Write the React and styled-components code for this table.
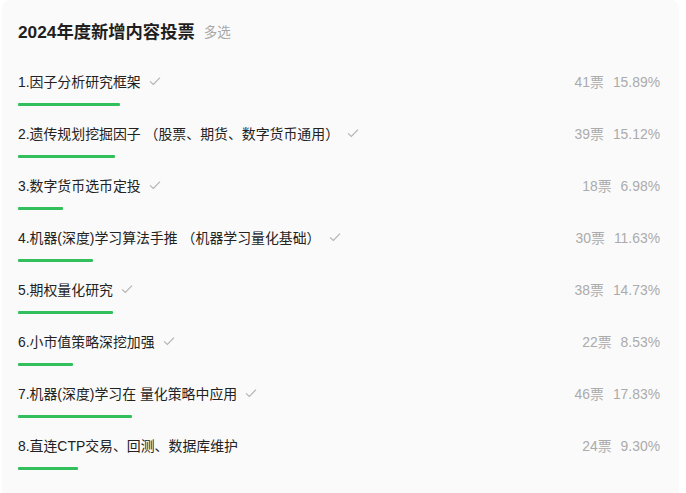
import React from "react";
import styled, { createGlobalStyle } from "styled-components";

const GlobalStyle = createGlobalStyle`
  html, body {
    margin: 0;
    padding: 0;
    background: #ffffff;
  }
  body {
    font-family: "Liberation Sans", "Noto Sans CJK SC", sans-serif;
    -webkit-font-smoothing: antialiased;
  }
`;

const options = [
  { label: "1.因子分析研究框架", votes: 41, pct: 15.89, checked: true },
  { label: "2.遗传规划挖掘因子 （股票、期货、数字货币通用）", votes: 39, pct: 15.12, checked: true },
  { label: "3.数字货币选币定投", votes: 18, pct: 6.98, checked: true },
  { label: "4.机器(深度)学习算法手推 （机器学习量化基础）", votes: 30, pct: 11.63, checked: true },
  { label: "5.期权量化研究", votes: 38, pct: 14.73, checked: true },
  { label: "6.小市值策略深挖加强", votes: 22, pct: 8.53, checked: true },
  { label: "7.机器(深度)学习在 量化策略中应用", votes: 46, pct: 17.83, checked: true },
  { label: "8.直连CTP交易、回测、数据库维护", votes: 24, pct: 9.3, checked: false },
];

export default function App() {
  return (
    <>
      <GlobalStyle />
      <Page>
        <Card>
          <Header>
            <Title>2024年度新增内容投票</Title>
            <Tag>多选</Tag>
          </Header>
          <List>
            {options.map((o) => (
              <Option key={o.label}>
                <Line>
                  <Label>
                    {o.label}
                    {o.checked && (
                      <Check viewBox="0 0 12 12">
                        <path d="M1 6.4 L4.3 9.4 L11 2.6" />
                      </Check>
                    )}
                  </Label>
                  <Stats>
                    <span>{o.votes}票</span>
                    <span>{o.pct.toFixed(2)}%</span>
                  </Stats>
                </Line>
                <Track>
                  <Fill style={{ width: `${o.pct}%` }} />
                </Track>
              </Option>
            ))}
          </List>
        </Card>
      </Page>
    </>
  );
}

const Page = styled.div`
  padding-left: 2px;
  height: 493px;
  overflow: hidden;
`;

const Card = styled.div`
  width: 677px;
  min-height: 520px;
  box-sizing: border-box;
  background: #fafafa;
  border-radius: 8px;
  padding: 16px 19px 0 16px;
`;

const Header = styled.div`
  display: flex;
  align-items: center;
  gap: 9px;
  height: 28px;
`;

const Title = styled.h2`
  margin: 0;
  font-size: 17.3px;
  font-weight: 700;
  color: #1f1f1f;
`;

const Tag = styled.span`
  font-size: 13.5px;
  color: #a8a8a8;
  margin-top: 1px;
`;

const List = styled.div`
  margin-top: 27px;
  display: flex;
  flex-direction: column;
`;

const Option = styled.div`
  height: 52px;
`;

const Line = styled.div`
  display: flex;
  align-items: center;
  justify-content: space-between;
  height: 20px;
  font-size: 13.9px;
`;

const Label = styled.div`
  display: flex;
  align-items: center;
  gap: 8px;
  color: #222;
  white-space: pre;
`;

const Check = styled.svg`
  width: 12px;
  height: 12px;
  fill: none;
  stroke: #b4b4b4;
  stroke-width: 1.2;
`;

const Stats = styled.div`
  display: flex;
  align-items: baseline;
  gap: 9px;
  color: #ababab;
`;

const Track = styled.div`
  margin-top: 12px;
  height: 3px;
`;

const Fill = styled.div`
  height: 100%;
  background: #31c05c;
  border-radius: 1px;
`;
